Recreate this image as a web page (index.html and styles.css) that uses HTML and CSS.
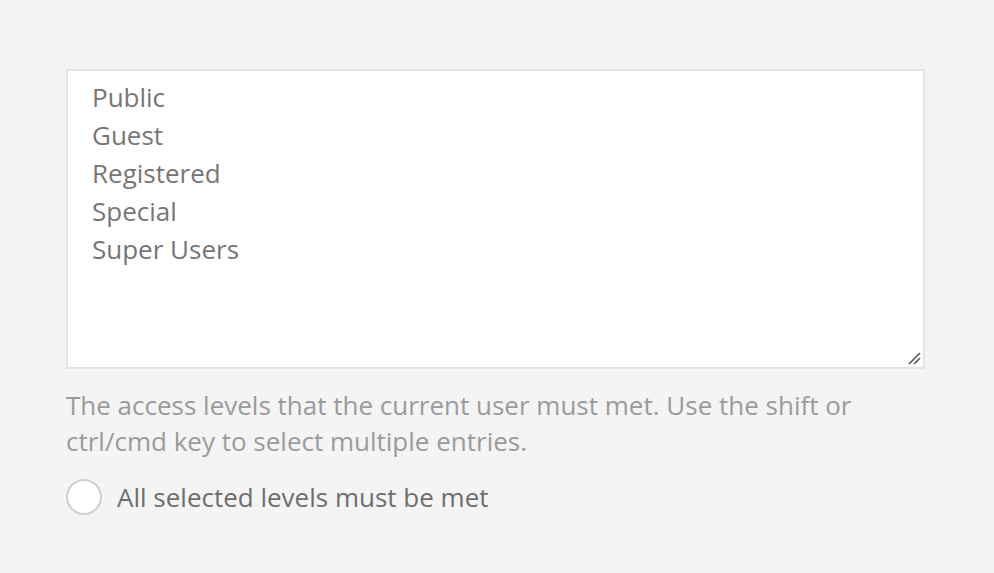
FILE: index.html
```html
<!DOCTYPE html>
<html>
<head>
<meta charset="utf-8">
<link rel="stylesheet" href="styles.css">
</head>
<body>
<div class="field">
  <div class="listbox">
    <div class="opt">Public</div>
    <div class="opt">Guest</div>
    <div class="opt">Registered</div>
    <div class="opt">Special</div>
    <div class="opt">Super Users</div>
    <svg class="grip" width="14" height="14" viewBox="0 0 14 14"><path d="M2 13 L13 2 M7 13 L13 7" stroke="#555" stroke-width="1.6" fill="none"/></svg>
  </div>
  <p class="help">The access levels that the current user must met. Use the shift or ctrl/cmd key to select multiple entries.</p>
  <label class="check"><span class="radio"></span><span class="label">All selected levels must be met</span></label>
</div>
</body>
</html>
```
FILE: styles.css
```css
html, body { margin: 0; padding: 0; }
body { background: #f4f4f4; font-family: "Open Sans", "Liberation Sans", sans-serif; }
.field { padding: 69px 0 0 66px; width: 859px; }
.listbox {
  position: relative;
  box-sizing: border-box;
  width: 859px;
  height: 300px;
  background: #fff;
  border: 2px solid #e4e4e4;
  padding: 7px 24px;
}
.opt { font-size: 26px; line-height: 38px; color: #767676; }
.grip { position: absolute; right: 2px; bottom: 2px; }
.help {
  margin: 18px 0 0;
  font-size: 26px;
  line-height: 36px;
  color: #9b9b9b;
  width: 859px;
}
.check { display: flex; align-items: center; gap: 15px; margin-top: 20px; }
.radio {
  box-sizing: border-box;
  width: 36px; height: 36px;
  border-radius: 50%;
  border: 2px solid #cfcfcf;
  background: #fff;
}
.label { font-size: 26px; line-height: 36px; color: #6e6e6e; }
```
